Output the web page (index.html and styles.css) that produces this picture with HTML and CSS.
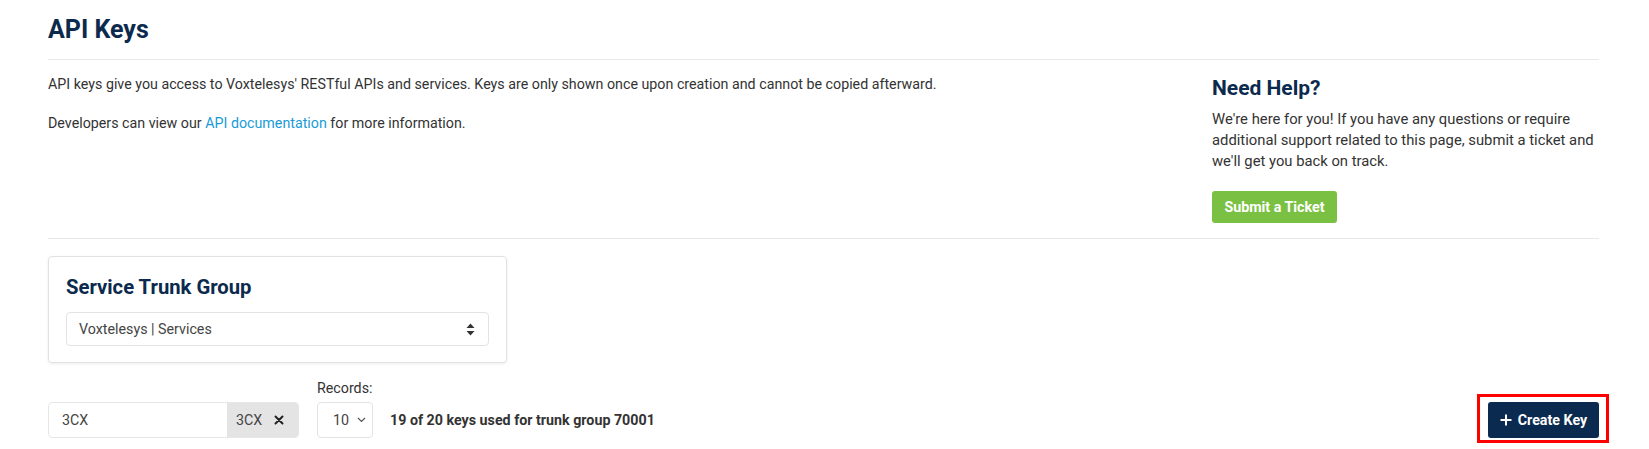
FILE: index.html
```html
<!DOCTYPE html>
<html lang="en">
<head>
<meta charset="utf-8">
<title>API Keys</title>
<link rel="stylesheet" href="styles.css">
</head>
<body>
<div class="page">
  <h1 class="page-title">API Keys</h1>
  <hr class="rule rule-top">
  <div class="intro">
    <div class="intro-text">
      <p class="intro-p1">API keys give you access to Voxtelesys' RESTful APIs and services. Keys are only shown once upon creation and cannot be copied afterward.</p>
      <p class="intro-p2">Developers can view our <a class="link" href="#">API documentation</a> for more information.</p>
    </div>
    <aside class="help">
      <h2 class="help-title">Need Help?</h2>
      <p class="help-text">We're here for you! If you have any questions or require additional support related to this page, submit a ticket and we'll get you back on track.</p>
      <button class="btn btn-green">Submit a Ticket</button>
    </aside>
  </div>
  <hr class="rule rule-mid">

  <section class="card">
    <h3 class="card-title">Service Trunk Group</h3>
    <div class="select">
      <span class="select-value">Voxtelesys | Services</span>
      <svg class="sort-icon" width="9" height="13" viewBox="0 0 9 13"><path d="M4.5 0.5 L8.5 5 L0.5 5 Z M0.5 8 L8.5 8 L4.5 12.5 Z" fill="#333"/></svg>
    </div>
  </section>

  <div class="toolbar">
    <div class="search-group">
      <span class="search-input">3CX</span>
      <span class="search-tag">3CX
        <svg class="tag-x" width="10" height="10" viewBox="0 0 10 10"><path d="M1.5 1.5 L8.5 8.5 M8.5 1.5 L1.5 8.5" stroke="#222" stroke-width="2" stroke-linecap="round"/></svg>
      </span>
    </div>
    <div class="records">
      <div class="records-label">Records:</div>
      <div class="records-select">
        <span>10</span>
        <svg class="chev" width="9" height="6" viewBox="0 0 9 6"><path d="M1 1 L4.5 4.5 L8 1" fill="none" stroke="#555" stroke-width="1.2"/></svg>
      </div>
    </div>
    <div class="status">19 of 20 keys used for trunk group 70001</div>
    <div class="create-wrap">
      <button class="btn btn-navy">
        <svg class="plus" width="12" height="12" viewBox="0 0 12 12"><path d="M6 0.5 V11.5 M0.5 6 H11.5" stroke="#fff" stroke-width="2"/></svg>
        Create Key
      </button>
    </div>
  </div>
</div>
</body>
</html>
```

FILE: styles.css
```css
* { box-sizing: border-box; }
html, body { margin: 0; padding: 0; background: #fff; }
body {
  font-family: Roboto, "Liberation Sans", Arial, sans-serif;
  font-size: 14.25px;
  line-height: 21px;
  color: #333;
}
.page {
  padding: 15px 50px 11px 48px;
}
.page-title {
  margin: 0;
  font-size: 25px;
  line-height: 29px;
  font-weight: 700;
  color: #0b2a4d;
}
.rule {
  border: 0;
  border-top: 1px solid #e8e8e8;
  margin: 0;
}
.rule-top { margin-top: 15px; }
.rule-mid { margin-top: 15px; }

.intro {
  display: grid;
  grid-template-columns: 1fr 387px;
}
.intro-text p { margin: 0; }
.intro-text .intro-p1 { margin-top: 14px; }
.intro-text .intro-p2 { margin-top: 18px; }
.link { color: #1a9bd7; text-decoration: none; }

.help { padding-top: 16px; }
.help-title {
  margin: 0;
  font-size: 21px;
  line-height: 24px;
  font-weight: 700;
  color: #0b2a4d;
}
.help-text {
  margin: 8.5px 0 0;
  font-size: 14.8px;
  line-height: 21px;
}

.btn {
  font-family: Roboto, "Liberation Sans", Arial, sans-serif;
  font-weight: 700;
  font-size: 14.25px;
  border: 0;
  border-radius: 3px;
  color: #fff;
  cursor: pointer;
}
.btn-green {
  margin-top: 19.5px;
  height: 32px;
  width: 125px;
  padding: 0;
  background: #7ac143;
}

.card {
  margin-top: 17px;
  width: 459px;
  border: 1px solid #e2e2e2;
  border-radius: 4px;
  box-shadow: 0 1px 3px rgba(0, 0, 0, 0.08);
  padding: 18px 17px 16px 17px;
}
.card-title {
  margin: 0 0 13px;
  font-size: 20.25px;
  line-height: 24px;
  font-weight: 700;
  color: #0b2a4d;
}
.select {
  height: 34px;
  border: 1px solid #e3e3e3;
  border-radius: 4px;
  display: flex;
  align-items: center;
  justify-content: space-between;
  padding: 0 13px 0 12px;
  color: #444;
}

.toolbar {
  margin-top: 15px;
  display: flex;
  align-items: flex-end;
}
.search-group {
  display: flex;
  width: 251px;
  height: 36px;
  border: 1px solid #e6e6e6;
  border-radius: 4px;
  overflow: hidden;
}
.search-input {
  flex: 1;
  display: flex;
  align-items: center;
  padding-left: 13px;
  color: #444;
}
.search-tag {
  width: 71px;
  background: #e4e4e4;
  display: flex;
  align-items: center;
  padding-left: 9px;
  gap: 12px;
  color: #444;
}
.records {
  margin-left: 18px;
  display: flex;
  flex-direction: column;
  gap: 3px;
}
.records-label { color: #333; }
.records-select {
  width: 56px;
  height: 36px;
  border: 1px solid #e3e3e3;
  border-radius: 4px;
  display: flex;
  align-items: center;
  padding-left: 15px;
  gap: 8px;
  color: #444;
}
.status {
  margin-left: 17px;
  height: 36px;
  line-height: 36px;
  font-weight: 700;
  color: #333;
}
.create-wrap {
  margin-left: auto;
  position: relative;
}
.create-wrap::after {
  content: "";
  position: absolute;
  top: -8px;
  bottom: -5px;
  left: -11px;
  right: -10px;
  border: 3px solid #ff0000;
  pointer-events: none;
}
.btn-navy {
  display: flex;
  align-items: center;
  justify-content: center;
  gap: 6px;
  width: 111px;
  height: 36px;
  padding: 0;
  background: #0b2a4f;
}
```
